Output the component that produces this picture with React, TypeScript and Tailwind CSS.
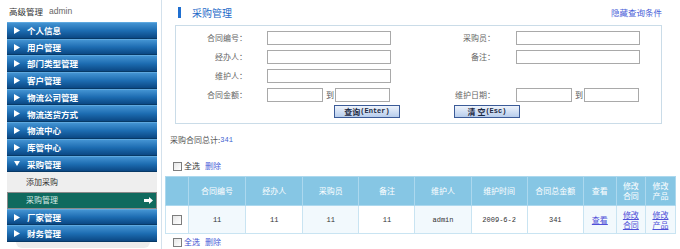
import React from "react";

const menus = [
  "个人信息",
  "用户管理",
  "部门类型管理",
  "客户管理",
  "物流公司管理",
  "物流送货方式",
  "物流中心",
  "库管中心",
];

function Arrow({ down }: { down?: boolean }) {
  return (
    <svg width="6" height="7" viewBox="0 0 6 7" className="shrink-0">
      {down ? <path d="M0 1 H6 L3 6 Z" fill="#fff" /> : <path d="M0 0 L6 3.5 L0 7 Z" fill="#fff" />}
    </svg>
  );
}

function MenuItem({ label, down }: { label: string; down?: boolean }) {
  return (
    <div className="h-[16.7px] flex items-center pl-[7px] bg-gradient-to-b from-[#4393d2] via-[#1d6db2] to-[#0b4884] border-t border-t-[#5ea8df] border-b border-b-[#073966]">
      <Arrow down={down} />
      <span className="ml-[7px] text-[8.5px] font-bold text-white leading-none">{label}</span>
    </div>
  );
}

function Box({ size = 9 }: { size?: number }) {
  return (
    <span
      className={`inline-block shrink-0 border border-[#7d7d7d] bg-gradient-to-br from-[#e6e6e6] to-white ${
        size === 9 ? "w-[9px] h-[9px]" : "w-[10px] h-[10px]"
      }`}
    />
  );
}

function Input({ w }: { w: string }) {
  return <div className={`${w} h-[14px] border border-[#a9a9a9] bg-white shrink-0`} />;
}

function Label({ text, w }: { text: string; w: string }) {
  return <div className={`${w} text-right text-[8px] text-[#666] shrink-0`}>{text}</div>;
}

function RangeInput() {
  return (
    <div className="flex items-center w-[124px] ml-[20px] shrink-0">
      <Input w="w-[56px]" />
      <span className="ml-[3px] text-[8px] text-[#555]">到</span>
      <Input w="w-[55px] ml-[1px]" />
    </div>
  );
}

const cols = [23, 57, 57, 56, 56, 56, 56, 56, 33, 29, 30];
const light = [false, true, false, true, false, true, false, false, true, true, true];

export default function App() {
  const mono = "font-['Liberation_Mono'] text-[7px] text-[#333]";
  return (
    <div className="w-[680px] h-[249px] overflow-hidden bg-white flex font-['Noto_Sans_CJK_SC',sans-serif] leading-none">
      {/* sidebar */}
      <div className="w-[161px] shrink-0 pl-[7px] flex flex-col">
        <div className="h-[22px] shrink-0 flex items-center pl-[2px] text-[8.5px]">
          <span className="text-[#333]">高级管理</span>
          <span className="ml-[6px] text-[#666] font-['Liberation_Sans']">admin</span>
        </div>
        <div className="w-[150px] shrink-0">
          {menus.map((m) => (
            <MenuItem key={m} label={m} />
          ))}
          <MenuItem label="采购管理" down />
          <div className="h-[20px] flex items-center pl-[19px] bg-[#eeeeee] text-[8px] text-[#333]">添加采购</div>
          <div className="h-[16.5px] flex items-center justify-between pl-[18px] pr-[3px] bg-[#0f6a5e] border border-[#8a8a8a] text-[8px] text-[#d6ebe5]">
            <span>采购管理</span>
            <svg width="9" height="7" viewBox="0 0 9 7">
              <path d="M0 2 H5 V0 L9 3.5 L5 7 V5 H0 Z" fill="#fff" />
            </svg>
          </div>
          <MenuItem label="厂家管理" />
          <MenuItem label="财务管理" />
        </div>
        <div className="ml-[9px] w-[134px] h-[6px] shrink-0 bg-[#ececec] rounded-b-[6px]" />
      </div>

      {/* main */}
      <div className="flex-1 border-l border-[#d3e1ec] flex flex-col overflow-hidden">
        <div className="h-[25px] shrink-0 flex items-center justify-between pl-[16px] pr-[18px]">
          <div className="flex items-center">
            <div className="w-[3px] h-[11px] bg-[#1f6fd0]" />
            <span className="ml-[11px] text-[10px] text-[#2369c8]">采购管理</span>
          </div>
          <span className="text-[8.5px] text-[#4a5fd8] mt-[-1px]">隐藏查询条件</span>
        </div>

        <div className="ml-[13px] w-[487px] h-[99px] border border-[#cadce8] pt-[2px] shrink-0">
          <div className="h-[19px] flex items-center">
            <Label text="合同编号：" w="w-[71px]" />
            <Input w="w-[124px] ml-[20px]" />
            <Label text="采购员：" w="w-[104px]" />
            <Input w="w-[124px] ml-[21px]" />
          </div>
          <div className="h-[19px] flex items-center">
            <Label text="经办人：" w="w-[71px]" />
            <Input w="w-[124px] ml-[20px]" />
            <Label text="备注：" w="w-[104px]" />
            <Input w="w-[124px] ml-[21px]" />
          </div>
          <div className="h-[19px] flex items-center">
            <Label text="维护人：" w="w-[71px]" />
            <Input w="w-[124px] ml-[20px]" />
          </div>
          <div className="h-[19px] flex items-center">
            <Label text="合同金额：" w="w-[71px]" />
            <RangeInput />
            <Label text="维护日期：" w="w-[104px]" />
            <div className="ml-[1px]">
              <RangeInput />
            </div>
          </div>
          <div className="h-[15px] flex items-center">
            <button className="ml-[158px] w-[66px] h-[13px] border border-[#3b5b98] bg-gradient-to-b from-[#eef3fb] to-[#b7cdec] text-[8px] font-bold text-[#1d2a44] flex items-center justify-center">
              查询<span className="font-['Liberation_Mono'] text-[7px]">(Enter)</span>
            </button>
            <button className="ml-[54px] w-[66px] h-[13px] border border-[#3b5b98] bg-gradient-to-b from-[#eef3fb] to-[#b7cdec] text-[8px] font-bold text-[#1d2a44] flex items-center justify-center">
              清 空<span className="font-['Liberation_Mono'] text-[7px]">(Esc)</span>
            </button>
          </div>
        </div>

        <div className="h-[32px] flex items-center pl-[8px] text-[8px] text-[#555] shrink-0">
          采购合同总计:<span className="text-[#3d5fd0] font-['Liberation_Mono'] text-[7px]">341</span>
        </div>

        <div className="h-[20px] flex items-center pl-[11px] text-[8px] shrink-0">
          <Box />
          <span className="ml-[2px] text-[#333]">全选</span>
          <span className="ml-[5px] text-[#4a5fd8]">删除</span>
        </div>

        <table className="ml-[3px] w-[511px] table-fixed border-collapse border border-[#c4e1f0] shrink-0">
          <colgroup>
            {cols.map((c, i) => (
              <col key={i} style={{ width: c }} />
            ))}
          </colgroup>
          <thead>
            <tr className="h-[29px] bg-[#86c6e4] text-white text-[8px] leading-[10px]">
              {["", "合同编号", "经办人", "采购员", "备注", "维护人", "维护时间", "合同总金额", "查看"].map((h, i) => (
                <th key={i} className="font-normal border border-[#acd8ee] p-0">
                  {h}
                </th>
              ))}
              <th className="font-normal border border-[#acd8ee] p-0">
                修改
                <br />
                合同
              </th>
              <th className="font-normal border border-[#acd8ee] p-0">
                修改
                <br />
                产品
              </th>
            </tr>
          </thead>
          <tbody>
            <tr className="h-[28px] text-center text-[8px] leading-[10px]">
              {[
                <span className="flex justify-center">
                  <Box size={10} />
                </span>,
                <span className={mono}>11</span>,
                <span className={mono}>11</span>,
                <span className={mono}>11</span>,
                <span className={mono}>11</span>,
                <span className={mono}>admin</span>,
                <span className={mono}>2009-6-2</span>,
                <span className={mono}>341</span>,
                <span className="text-[#5050d8] underline">查看</span>,
                <span className="text-[#5050d8] underline">
                  修改
                  <br />
                  合同
                </span>,
                <span className="text-[#5050d8] underline">
                  修改
                  <br />
                  产品
                </span>,
              ].map((c, i) => (
                <td key={i} className={`p-0 border border-[#c9e4f2] ${light[i] ? "bg-[#f2f9fd]" : "bg-white"}`}>
                  {c}
                </td>
              ))}
            </tr>
          </tbody>
        </table>

        <div className="h-[16px] flex items-center pl-[11px] text-[8px] shrink-0">
          <Box />
          <span className="ml-[2px] text-[#3d4fd0]">全选</span>
          <span className="ml-[5px] text-[#4a5fd8]">删除</span>
        </div>
      </div>
    </div>
  );
}
